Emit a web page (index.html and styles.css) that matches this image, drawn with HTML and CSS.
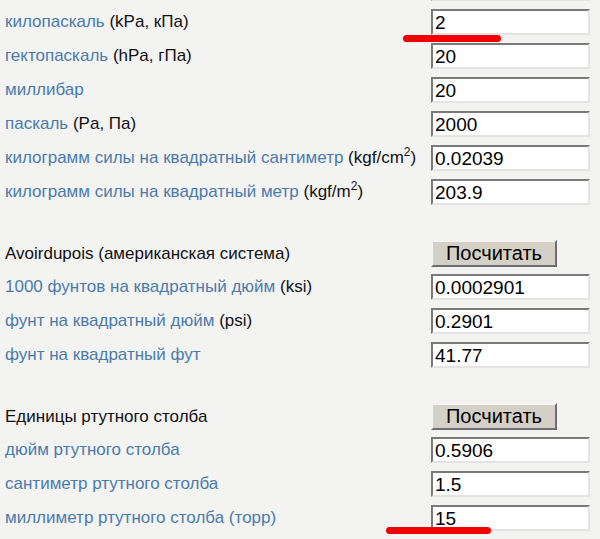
FILE: index.html
```html
<!DOCTYPE html>
<html lang="ru">
<head>
  <meta charset="UTF-8">
  <title>Давление</title>
  <meta name="viewport" content="width=device-width, initial-scale=1.0">
  <link rel="stylesheet" href="styles.css">
</head>
<body>
  <div class="converter">
    <div class="row">
      <span class="unit"></span>
      <input class="val" type="text" id="bar" value="0.02">
    </div>
    <div class="row">
      <label class="unit" for="kpa">килопаскаль <span class="abbr">(kPa, кПа)</span></label>
      <input class="val" type="text" id="kpa" value="2">
    </div>
    <div class="row">
      <label class="unit" for="hpa">гектопаскаль <span class="abbr">(hPa, гПа)</span></label>
      <input class="val" type="text" id="hpa" value="20">
    </div>
    <div class="row">
      <label class="unit" for="mbar">миллибар</label>
      <input class="val" type="text" id="mbar" value="20">
    </div>
    <div class="row">
      <label class="unit" for="pa">паскаль <span class="abbr">(Pa, Па)</span></label>
      <input class="val" type="text" id="pa" value="2000">
    </div>
    <div class="row">
      <label class="unit" for="kgfcm">килограмм силы на квадратный сантиметр <span class="abbr">(kgf/cm<sup>2</sup>)</span></label>
      <input class="val" type="text" id="kgfcm" value="0.02039">
    </div>
    <div class="row">
      <label class="unit" for="kgfm">килограмм силы на квадратный метр <span class="abbr">(kgf/m<sup>2</sup>)</span></label>
      <input class="val" type="text" id="kgfm" value="203.9">
    </div>

    <div class="row head">
      <span class="group">Avoirdupois (американская система)</span>
      <button class="btn" type="button">Посчитать</button>
    </div>
    <div class="row">
      <label class="unit" for="ksi">1000 фунтов на квадратный дюйм <span class="abbr">(ksi)</span></label>
      <input class="val" type="text" id="ksi" value="0.0002901">
    </div>
    <div class="row">
      <label class="unit" for="psi">фунт на квадратный дюйм <span class="abbr">(psi)</span></label>
      <input class="val" type="text" id="psi" value="0.2901">
    </div>
    <div class="row">
      <label class="unit" for="psf">фунт на квадратный фут</label>
      <input class="val" type="text" id="psf" value="41.77">
    </div>

    <div class="row head">
      <span class="group">Единицы ртутного столба</span>
      <button class="btn" type="button">Посчитать</button>
    </div>
    <div class="row">
      <label class="unit" for="inhg">дюйм ртутного столба</label>
      <input class="val" type="text" id="inhg" value="0.5906">
    </div>
    <div class="row">
      <label class="unit" for="cmhg">сантиметр ртутного столба</label>
      <input class="val" type="text" id="cmhg" value="1.5">
    </div>
    <div class="row">
      <label class="unit" for="mmhg">миллиметр ртутного столба (торр)</label>
      <input class="val" type="text" id="mmhg" value="15">
    </div>
  </div>

  <span class="mark mark-top"></span>
  <span class="mark mark-bottom"></span>
</body>
</html>
```

FILE: styles.css
```css
body {
  margin: 0;
  background-color: #f3f3f1;
  font-family: "Liberation Sans", Arial, sans-serif;
  color: #111;
  overflow: hidden;
}
.converter {
  margin-top: -25px;
  padding-left: 5px;
  width: 585px;
}
.row {
  display: flex;
  align-items: center;
  height: 26px;
  margin-bottom: 8px;
}
.unit,
.group {
  flex: none;
  width: 426px;
  font-size: 17px;
  white-space: nowrap;
}
.unit {
  color: #4c7baa;
}
.abbr {
  color: #111;
}
sup {
  font-size: 12px;
  line-height: 0;
}
.val {
  box-sizing: border-box;
  width: 159px;
  height: 26px;
  margin: 0;
  padding: 1px 2px 0;
  background-color: #fff;
  border: 2px solid;
  border-color: #7a7a7a #e4e4e4 #e4e4e4 #7a7a7a;
  font-family: "Liberation Sans", Arial, sans-serif;
  font-size: 19px;
  color: #000;
}
.head {
  margin-top: 35px;
  height: 27px;
  margin-bottom: 7px;
}
.btn {
  box-sizing: border-box;
  width: 126px;
  height: 27px;
  padding: 0;
  background-color: #d4d0c8;
  border: 2px solid;
  border-color: #f4f4f2 #6e6e6e #6e6e6e #f4f4f2;
  font-family: "Liberation Sans", Arial, sans-serif;
  font-size: 20px;
  color: #000;
}
.mark {
  position: absolute;
  height: 7px;
  border-radius: 4px;
  background-color: #f20000;
}
.mark-top {
  left: 403px;
  top: 35px;
  width: 98px;
}
.mark-bottom {
  left: 386px;
  top: 527px;
  width: 105px;
}
```
